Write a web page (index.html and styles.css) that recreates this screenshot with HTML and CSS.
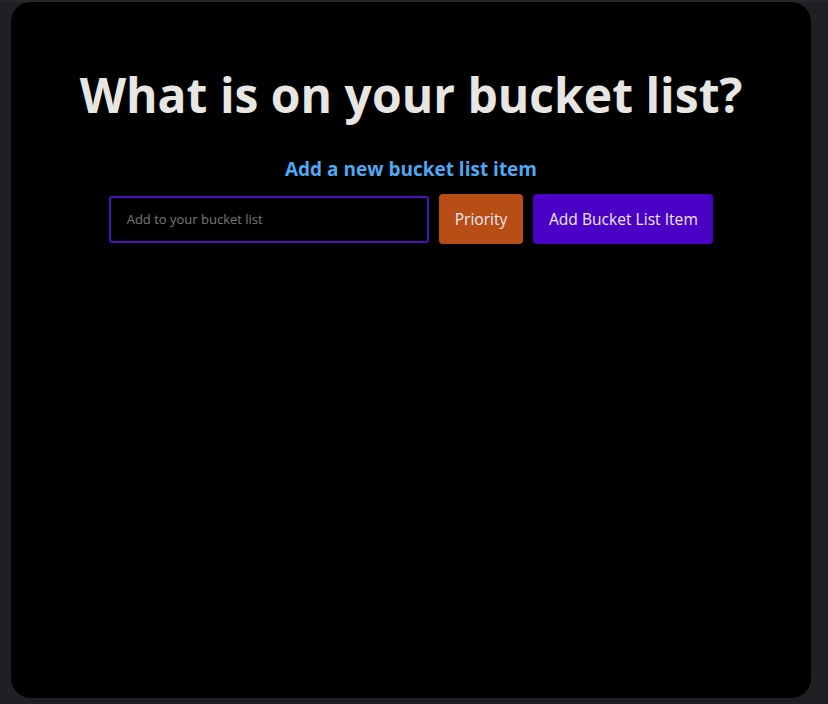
FILE: index.html
```html
<!DOCTYPE html>
<html lang="en">
<head>
<meta charset="utf-8">
<title>Bucket List</title>
<link rel="stylesheet" href="styles.css">
</head>
<body>
  <div class="topbar"></div>
  <main class="card">
    <h1 class="title">What is on your bucket list?</h1>
    <h3 class="subtitle">Add a new bucket list item</h3>
    <form class="row">
      <input class="field" type="text" placeholder="Add to your bucket list">
      <button class="btn btn-priority" type="button">Priority</button>
      <button class="btn btn-add" type="button">Add Bucket List Item</button>
    </form>
  </main>
</body>
</html>
```
FILE: styles.css
```css
html, body {
  margin: 0;
  padding: 0;
  height: 100%;
}
body {
  background: #1f2023;
  font-family: "Open Sans", "Noto Sans", sans-serif;
  display: flex;
  flex-direction: column;
}
.topbar {
  height: 2px;
  background: #27282a;
  flex: none;
}
.card {
  margin: 0 17px 6px 11px;
  height: 696px;
  background: #000;
  border-radius: 20px;
  display: flex;
  flex-direction: column;
  align-items: center;
  padding-top: 65px;
  box-sizing: border-box;
}
.title {
  margin: 0;
  font-size: 48px;
  line-height: 56px;
  font-weight: 700;
  color: #e8e6e3;
}
.subtitle {
  margin: 34px 0 0;
  font-size: 19px;
  line-height: 24px;
  font-weight: 700;
  color: #4ea8f2;
}
.row {
  margin-top: 13px;
  display: flex;
  align-items: center;
  gap: 10px;
}
.field {
  width: 320px;
  height: 47px;
  box-sizing: border-box;
  background: #000;
  border: 2px solid #4a10bd;
  border-radius: 3px;
  padding: 0 16px;
  color: #e8e6e3;
  font-family: inherit;
  font-size: 13px;
  outline: none;
}
.field::placeholder {
  color: #7a7a7a;
}
.btn {
  height: 50px;
  border: none;
  border-radius: 4px;
  padding: 0 16px;
  font-family: inherit;
  font-size: 15.6px;
  color: #ece9f5;
  cursor: pointer;
}
.btn-priority {
  background: #b74e16;
}
.btn-add {
  background: #4b00c6;
  padding: 0 15.5px;
}
```
